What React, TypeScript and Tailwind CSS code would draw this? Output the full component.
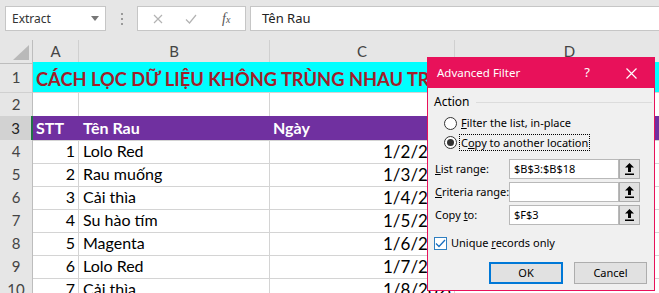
import { ReactNode } from "react";

const rows = [
  { n: 4, stt: 1, name: "Lolo Red", date: "1/2/2020" },
  { n: 5, stt: 2, name: "Rau muống", date: "1/3/2020" },
  { n: 6, stt: 3, name: "Cải thìa", date: "1/4/2020" },
  { n: 7, stt: 4, name: "Su hào tím", date: "1/5/2020" },
  { n: 8, stt: 5, name: "Magenta", date: "1/6/2020" },
  { n: 9, stt: 6, name: "Lolo Red", date: "1/7/2020" },
  { n: 10, stt: 7, name: "Cải thìa", date: "1/8/2020" },
];

const cols = "grid grid-cols-[33px_46px_191px_185px_230px]";

function RowHead({ n, active }: { n: number; active?: boolean }) {
  return (
    <div
      className={
        "flex items-center justify-center border-b border-r text-[15px] " +
        (active
          ? "bg-[#d2d2d2] border-b-[#c6c6c6] border-r-[#217346] border-r-2 text-[#222]"
          : "bg-[#e6e6e6] border-b-[#d0d0d0] border-r-[#bdbdbd] text-[#444]")
      }
    >
      {n}
    </div>
  );
}

function Cell({ children, className = "" }: { children?: ReactNode; className?: string }) {
  return (
    <div className={"flex items-center border-r border-b border-[#d4d4d4] whitespace-nowrap overflow-hidden " + className}>
      {children}
    </div>
  );
}

function FormulaBar() {
  return (
    <div className="h-[40px] bg-[#e6e6e6] flex items-start pt-[6px] pl-[5px] font-['Noto_Sans',sans-serif]">
      <div className="w-[101px] h-[25px] bg-white border border-[#c6c6c6] flex items-center justify-between pl-[6px] pr-[6px] text-[12px] text-[#333]">
        <span>Extract</span>
        <svg width="8" height="5" viewBox="0 0 8 5"><path d="M0 0h8L4 5z" fill="#777" /></svg>
      </div>
      <div className="w-[31px] h-[25px] flex flex-col items-center justify-center gap-[3px]">
        <span className="w-[2px] h-[2px] bg-[#9a9a9a]" />
        <span className="w-[2px] h-[2px] bg-[#9a9a9a]" />
        <span className="w-[2px] h-[2px] bg-[#9a9a9a]" />
      </div>
      <div className="w-[109px] h-[25px] bg-white border border-[#c6c6c6] flex items-center">
        <svg className="ml-[15px]" width="10" height="10" viewBox="0 0 10 10">
          <path d="M1 1l8 8M9 1l-8 8" stroke="#b3b3b3" strokeWidth="1.2" />
        </svg>
        <svg className="ml-[22px]" width="12" height="10" viewBox="0 0 12 10">
          <path d="M1 5.5l3.5 3.5L11 1" stroke="#b3b3b3" strokeWidth="1.2" fill="none" />
        </svg>
        <span className="ml-[25px] italic font-['Liberation_Serif',serif] text-[14px] text-[#555]">
          f<span className="text-[10px]">x</span>
        </span>
      </div>
      <div className="ml-[4px] flex-1 h-[25px] bg-white border border-r-0 border-[#c6c6c6] flex items-center pl-[11px] text-[13px] text-[#222]">
        Tên Rau
      </div>
    </div>
  );
}

function Sheet() {
  return (
    <div className="font-['Lato',sans-serif] text-[16px] text-black">
      <div className={cols + " h-[22px] bg-[#e6e6e6] text-[15px] text-[#444]"}>
        <div className="relative border-r border-b border-[#bdbdbd]">
          <svg className="absolute right-[3px] bottom-[3px]" width="16" height="15" viewBox="0 0 16 15">
            <path d="M16 0V15H0z" fill="#b9b9b9" />
          </svg>
        </div>
        {["A", "B", "C", "D"].map((c) => (
          <div key={c} className="flex items-center justify-center border-r border-b border-r-[#d0d0d0] border-b-[#bdbdbd]">
            {c}
          </div>
        ))}
      </div>
      <div className={cols + " h-[31px]"}>
        <RowHead n={1} />
        <div className="col-span-4 bg-[#00ffff] border-b border-[#d4d4d4] flex items-end pb-[4px] pl-[3px] whitespace-nowrap overflow-visible">
          <span className="font-bold text-[18.3px] text-[#a11d2a] leading-none">
            CÁCH LỌC DỮ LIỆU KHÔNG TRÙNG NHAU TRONG EXCEL
          </span>
        </div>
      </div>
      <div className={cols + " h-[23px]"}>
        <RowHead n={2} />
        <Cell />
        <Cell />
        <Cell />
        <Cell />
      </div>
      <div className={cols + " h-[24px]"}>
        <RowHead n={3} active />
        <div className="col-span-4 bg-[#7030a0] border-b border-[#d4d4d4] grid grid-cols-[46px_191px_185px_230px] text-white font-bold">
          <div className="flex items-center pl-[3px]">STT</div>
          <div className="flex items-center pl-[4px]">Tên Rau</div>
          <div className="flex items-center pl-[3px]">Ngày</div>
          <div />
        </div>
      </div>
      {rows.map((r) => (
        <div key={r.n} className={cols + " h-[23px]"}>
          <RowHead n={r.n} />
          <Cell className="justify-end pr-[3px]">{r.stt}</Cell>
          <Cell className="pl-[4px]">{r.name}</Cell>
          <Cell className="pl-[113px] text-[17px]">{r.date}</Cell>
          <Cell />
        </div>
      ))}
    </div>
  );
}

function Radio({ checked }: { checked?: boolean }) {
  return (
    <span className="w-[13px] h-[13px] rounded-full border border-[#333] bg-white flex items-center justify-center shrink-0">
      {checked && <span className="w-[7px] h-[7px] rounded-full bg-[#333]" />}
    </span>
  );
}

function PickButton() {
  return (
    <div className="w-[21px] h-full bg-[#e1e1e1] border border-[#adadad] flex items-center justify-center">
      <svg width="9" height="12" viewBox="0 0 9 12">
        <path d="M4.5 0L9 4.5H6V9H3V4.5H0z" fill="#000" />
        <rect x="0" y="10.5" width="9" height="1.5" fill="#000" />
      </svg>
    </div>
  );
}

function RangeRow({ label, value }: { label: ReactNode; value?: string }) {
  return (
    <div className="flex items-center h-[20px] mt-[3px] first:mt-0">
      <div className="w-[81px] pl-[7px] shrink-0 whitespace-nowrap">{label}</div>
      <div className="w-[110px] h-full bg-white border border-[#b9b9b9] flex items-center pl-[4px]">{value}</div>
      <PickButton />
    </div>
  );
}

function AdvancedFilter() {
  return (
    <div className="absolute left-[427px] top-[57px] w-[228px] h-[234px] border border-[#e8115a] bg-[#f0f0f0] font-['Noto_Sans',sans-serif] text-[11px] text-black">
      <div className="h-[30px] bg-[#e8115a] text-white flex items-center pl-[9px]">
        <span className="text-[11.5px]">Advanced Filter</span>
        <span className="ml-auto w-[20px] text-center text-[13px]">?</span>
        <svg className="ml-[29px] mr-[17px]" width="11" height="11" viewBox="0 0 11 11">
          <path d="M0.5 0.5l10 10M10.5 0.5l-10 10" stroke="#fff" strokeWidth="1.2" />
        </svg>
      </div>
      <div className="flex flex-col">
        <div className="mt-[6px] h-[16px] flex items-center pl-[6px] pr-[2px]">
          <span className="text-[12px]">Action</span>
          <span className="ml-[6px] flex-1 h-px bg-[#dcdcdc]" />
        </div>
        <div className="mt-[4px] h-[19px] flex items-center pl-[16px] gap-[4px]">
          <Radio />
          <span><u>F</u>ilter the list, in-place</span>
        </div>
        <div className="h-[19px] flex items-center pl-[16px] gap-[2px]">
          <Radio checked />
          <span className="border border-dotted border-black px-[1px] leading-[15px]">C<u>o</u>py to another location</span>
        </div>
        <div className="mt-[7px] flex flex-col">
          <RangeRow label={<><u>L</u>ist range:</>} value="$B$3:$B$18" />
          <RangeRow label={<><u>C</u>riteria range:</>} />
          <RangeRow label={<>Copy <u>t</u>o:</>} value="$F$3" />
        </div>
        <div className="mt-[10px] h-[16px] flex items-center pl-[6px] gap-[4px]">
          <span className="w-[13px] h-[13px] border border-[#2f7fc1] bg-white flex items-center justify-center">
            <svg width="11" height="9" viewBox="0 0 11 9">
              <path d="M1 4.5l3 3L10 1" stroke="#1a6fc0" strokeWidth="1.3" fill="none" />
            </svg>
          </span>
          <span>Unique <u>r</u>ecords only</span>
        </div>
        <div className="mt-[11px] flex justify-end gap-[11px] pr-[7px]">
          <div className="w-[74px] h-[22px] bg-[#e1e1e1] border-2 border-[#0078d7] flex items-center justify-center">OK</div>
          <div className="w-[73px] h-[22px] bg-[#e1e1e1] border border-[#adadad] flex items-center justify-center">Cancel</div>
        </div>
      </div>
    </div>
  );
}

export default function App() {
  return (
    <div className="relative w-[659px] h-[293px] overflow-hidden bg-white">
      <FormulaBar />
      <Sheet />
      <AdvancedFilter />
    </div>
  );
}
